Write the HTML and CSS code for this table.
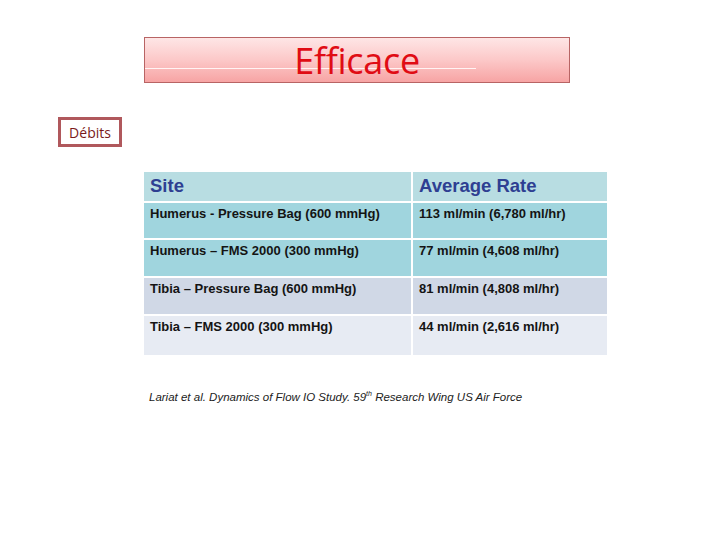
FILE: index.html
```html
<!DOCTYPE html>
<html>
<head>
<meta charset="utf-8">
<link rel="stylesheet" href="styles.css">
</head>
<body>
<div class="page">
  <div class="title-box">
    <div class="title-line"></div>
    <span class="title">Efficace</span>
  </div>
  <div class="tag">Débits</div>
  <div class="table">
    <div class="cell head">Site</div>
    <div class="cell head">Average Rate</div>
    <div class="cell r1">Humerus - Pressure Bag (600 mmHg)</div>
    <div class="cell r1">113 ml/min (6,780 ml/hr)</div>
    <div class="cell r1">Humerus – FMS 2000 (300 mmHg)</div>
    <div class="cell r1">77 ml/min (4,608 ml/hr)</div>
    <div class="cell r3">Tibia – Pressure Bag (600 mmHg)</div>
    <div class="cell r3">81 ml/min (4,808 ml/hr)</div>
    <div class="cell r4">Tibia – FMS 2000 (300 mmHg)</div>
    <div class="cell r4">44 ml/min (2,616 ml/hr)</div>
  </div>
  <div class="cite">Lariat et al. Dynamics of Flow IO Study. 59<sup>th</sup> Research Wing US Air Force</div>
</div>
</body>
</html>
```
FILE: styles.css
```css
html, body {
  margin: 0;
  padding: 0;
  background: #ffffff;
}
.page {
  width: 720px;
  height: 540px;
  position: relative;
  display: flex;
  flex-direction: column;
}
.title-box {
  margin: 37px 0 0 144px;
  width: 424px;
  height: 44px;
  border: 1px solid #b86464;
  background: linear-gradient(to bottom, #fee6e6 0%, #fcc8c8 50%, #f7a4a4 100%);
  position: relative;
  display: flex;
  justify-content: center;
  align-items: center;
}
.title-line {
  position: absolute;
  left: 0;
  top: 30px;
  width: 331px;
  height: 1px;
  background: #fff4f4;
}
.title {
  position: relative;
  font-family: "Open Sans", "Liberation Sans", sans-serif;
  font-size: 36px;
  color: #e00c14;
  letter-spacing: -0.3px;
  line-height: 44px;
  margin-top: 2px;
}
.tag {
  margin: 34px 0 0 58px;
  width: 58px;
  height: 24px;
  border: 3px solid #b0585c;
  font-family: "Open Sans", "Liberation Sans", sans-serif;
  font-size: 14px;
  color: #7a1a1a;
  display: flex;
  align-items: center;
  justify-content: center;
}
.table {
  margin: 25px 0 0 144px;
  width: 463px;
  display: grid;
  grid-template-columns: 267px 194px;
  grid-template-rows: 29px 35px 36px 36px 39px;
  column-gap: 2px;
  row-gap: 2px;
  background: #ffffff;
  font-family: "Liberation Sans", Arial, sans-serif;
}
.cell {
  padding: 3px 6px 0 6px;
  font-size: 13px;
  font-weight: bold;
  color: #141414;
}
.head {
  background: #b8dde2;
  color: #2e3f92;
  font-size: 18.5px;
  padding-top: 3px;
}
.r1 { background: #a0d5de; }
.r3 { background: #d0d8e6; }
.r4 { background: #e7ebf3; }
.cite {
  margin: 35px 0 0 149px;
  font-family: "Liberation Sans", Arial, sans-serif;
  font-style: italic;
  font-size: 11.5px;
  color: #222222;
}
.cite sup {
  font-size: 7px;
}
```
